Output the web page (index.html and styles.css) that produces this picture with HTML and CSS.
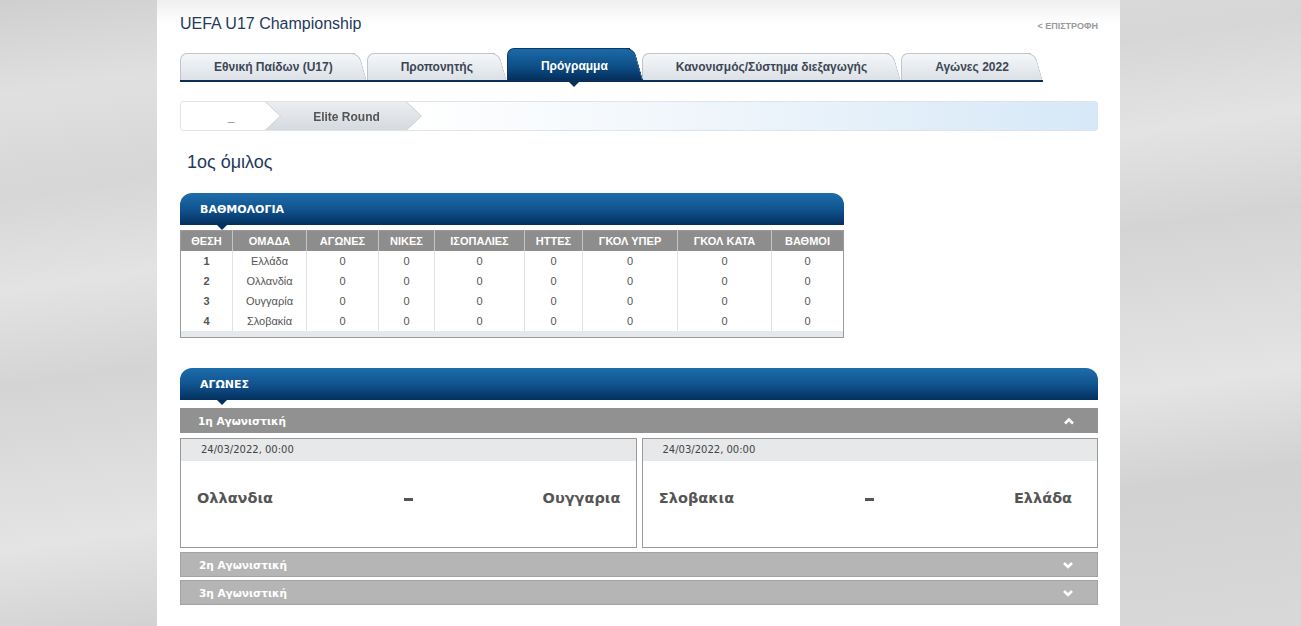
FILE: index.html
```html
<!DOCTYPE html>
<html lang="el">
<head>
    <meta charset="UTF-8">
    <meta name="viewport" content="width=device-width, initial-scale=1.0">
    <title>UEFA U17 Championship - Πρόγραμμα</title>
    <link rel="stylesheet" href="styles.css">
</head>
<body>
    <div class="page">
        <div class="top">
            <h1 class="title">UEFA U17 Championship</h1>
            <a class="back" href="#">&lt; ΕΠΙΣΤΡΟΦΗ</a>
        </div>

        <div class="tabs">
            <a class="tab" href="#">Εθνική Παίδων (U17)</a>
            <a class="tab" href="#">Προπονητής</a>
            <a class="tab active" href="#">Πρόγραμμα<span class="tab-arrow"></span></a>
            <a class="tab" href="#">Κανονισμός/Σύστημα διεξαγωγής</a>
            <a class="tab" href="#">Αγώνες 2022</a>
        </div>

        <div class="crumbs">
            <div class="crumb first">_</div>
            <div class="crumb-wrap">
                <div class="crumb step">Elite Round</div>
            </div>
        </div>

        <h2 class="group-title">1ος όμιλος</h2>

        <div class="panel standings">
            <div class="panel-head">ΒΑΘΜΟΛΟΓΙΑ</div>
            <table class="table">
                <colgroup>
                    <col class="c-pos"><col class="c-team"><col class="c-played"><col class="c-win">
                    <col class="c-draw"><col class="c-loss"><col class="c-gf"><col class="c-ga"><col class="c-pts">
                </colgroup>
                <thead>
                    <tr>
                        <th>ΘΕΣΗ</th><th>ΟΜΑΔΑ</th><th>ΑΓΩΝΕΣ</th><th>ΝΙΚΕΣ</th><th>ΙΣΟΠΑΛΙΕΣ</th>
                        <th>ΗΤΤΕΣ</th><th>ΓΚΟΛ ΥΠΕΡ</th><th>ΓΚΟΛ ΚΑΤΑ</th><th>ΒΑΘΜΟΙ</th>
                    </tr>
                </thead>
                <tbody>
                    <tr><td class="pos">1</td><td>Ελλάδα</td><td>0</td><td>0</td><td>0</td><td>0</td><td>0</td><td>0</td><td>0</td></tr>
                    <tr><td class="pos">2</td><td>Ολλανδία</td><td>0</td><td>0</td><td>0</td><td>0</td><td>0</td><td>0</td><td>0</td></tr>
                    <tr><td class="pos">3</td><td>Ουγγαρία</td><td>0</td><td>0</td><td>0</td><td>0</td><td>0</td><td>0</td><td>0</td></tr>
                    <tr><td class="pos">4</td><td>Σλοβακία</td><td>0</td><td>0</td><td>0</td><td>0</td><td>0</td><td>0</td><td>0</td></tr>
                </tbody>
            </table>
            <div class="table-foot"></div>
        </div>

        <div class="panel matches">
            <div class="panel-head">ΑΓΩΝΕΣ</div>

            <div class="round open">
                <span>1η Αγωνιστική</span>
                <svg class="chev" width="12" height="8" viewBox="0 0 12 8"><polyline points="2,6.5 6,2.5 10,6.5" fill="none" stroke="#fff" stroke-width="2.6"/></svg>
            </div>
            <div class="games">
                <div class="game">
                    <div class="game-date">24/03/2022, 00:00</div>
                    <div class="game-teams">
                        <span class="team">Ολλανδια</span>
                        <span class="score"></span>
                        <span class="team">Ουγγαρια</span>
                    </div>
                </div>
                <div class="game">
                    <div class="game-date">24/03/2022, 00:00</div>
                    <div class="game-teams">
                        <span class="team">Σλοβακια</span>
                        <span class="score"></span>
                        <span class="team">Ελλάδα</span>
                    </div>
                </div>
            </div>

            <div class="round">
                <span>2η Αγωνιστική</span>
                <svg class="chev" width="12" height="8" viewBox="0 0 12 8"><polyline points="2,2 6,6 10,2" fill="none" stroke="#fff" stroke-width="2.6"/></svg>
            </div>
            <div class="round">
                <span>3η Αγωνιστική</span>
                <svg class="chev" width="12" height="8" viewBox="0 0 12 8"><polyline points="2,2 6,6 10,2" fill="none" stroke="#fff" stroke-width="2.6"/></svg>
            </div>
        </div>
    </div>
</body>
</html>
```

FILE: styles.css
```css
html, body {
    margin: 0;
    height: 100%;
}
body {
    font-family: 'Liberation Sans', Arial, sans-serif;
    background: linear-gradient(172deg, #cfcfcf 0%, #e0e0e0 12%, #d6d6d6 24%, #e3e3e3 36%, #d4d4d4 48%, #dcdcdc 58%, #e4e4e4 68%, #d2d2d2 80%, #d8d8d8 100%);
    overflow: hidden;
}
.page {
    width: 963px;
    min-height: 100%;
    margin-left: 157px;
    box-sizing: border-box;
    padding: 14px 22px 0 23px;
    background: linear-gradient(#efefef 0, #fff 24px);
}
.top {
    display: flex;
    justify-content: space-between;
    align-items: flex-end;
}
.title {
    margin: 0;
    font-size: 16px;
    font-weight: normal;
    line-height: 19px;
    color: #1f3a5c;
}
.back {
    font-size: 9px;
    font-weight: bold;
    color: #9a9a9a;
    text-decoration: none;
    margin-bottom: 2px;
}

/* tabs */
.tabs {
    display: inline-flex;
    align-items: flex-end;
    margin-top: 15px;
    border-bottom: 2px solid #0a2f57;
}
.tab {
    position: relative;
    z-index: 1;
    height: 27px;
    line-height: 28px;
    padding: 0 34px;
    font-size: 12px;
    font-weight: bold;
    color: #3c4756;
    text-decoration: none;
    white-space: nowrap;
}
.tab::before,
.tab::after {
    content: '';
    position: absolute;
    top: 0;
    bottom: 0;
    z-index: -1;
    background: linear-gradient(#f5f7f9, #dce1e6);
    border-top: 1px solid #bfc5cc;
}
.tab::before {
    left: 0;
    right: 12px;
    border-left: 1px solid #bfc5cc;
    border-radius: 7px 0 0 0;
}
.tab::after {
    right: 8px;
    width: 24px;
    border-right: 1px solid #bfc5cc;
    border-radius: 0 8px 0 0;
    transform: skewX(16deg);
    transform-origin: top;
}
.tab.active {
    padding-top: 5px;
    line-height: 27px;
    color: #fff;
    z-index: 2;
}
.tab.active::before,
.tab.active::after {
    background: linear-gradient(#1c6aa7, #0e4f88 55%, #042f5c);
    border-color: #0b3a6a;
}
.tab-arrow {
    position: absolute;
    left: 50%;
    bottom: -7px;
    margin-left: -5px;
    border-left: 5px solid transparent;
    border-right: 5px solid transparent;
    border-top: 5px solid #0a2f57;
}

/* breadcrumb */
.crumbs {
    display: flex;
    margin-top: 19px;
    height: 28px;
    border: 1px solid #dfe4e8;
    border-radius: 3px;
    background: linear-gradient(90deg, #fff 0%, #fff 25%, #eef5fb 60%, #d6e8f7 100%);
}
.crumb {
    font-size: 12px;
    font-weight: bold;
    color: #555;
    line-height: 30px;
    text-align: center;
}
.crumb.first {
    width: 100px;
    background: #fff;
    border-radius: 3px 0 0 3px;
    margin-right: -15px;
}
.crumb-wrap {
    filter: drop-shadow(1px 0 0 #c9ced3) drop-shadow(-1px 0 0 #c9ced3);
}
.crumb.step {
    width: 155px;
    height: 28px;
    padding-left: 3px;
    background: linear-gradient(#eceef1, #d5dade);
    clip-path: polygon(0 0, 140px 0, 155px 50%, 140px 100%, 0 100%, 15px 50%);
}

.group-title {
    margin: 20px 0 0 7px;
    font-size: 18px;
    font-weight: normal;
    line-height: 22px;
    color: #1f3a5c;
}

/* panels */
.panel {
    margin-top: 20px;
}
.standings {
    width: 664px;
}
.matches {
    margin-top: 30px;
}
.panel-head {
    position: relative;
    height: 32px;
    line-height: 33px;
    padding-left: 20px;
    border-radius: 12px 12px 0 0;
    background: linear-gradient(#1d6dab, #115490 50%, #03305d);
    color: #fff;
    font-family: 'DejaVu Sans', Verdana, sans-serif;
    font-size: 11px;
    font-weight: bold;
}
.panel-head::after {
    content: '';
    position: absolute;
    left: 37px;
    bottom: -5px;
    border-left: 5px solid transparent;
    border-right: 5px solid transparent;
    border-top: 5px solid #03305d;
}

/* standings table */
.table {
    width: 100%;
    margin-top: 5px;
    border: 1px solid #9a9a9a;
    border-bottom: none;
    border-collapse: collapse;
    table-layout: fixed;
    font-size: 11px;
}
.c-pos { width: 52px; }
.c-team { width: 74px; }
.c-played { width: 72px; }
.c-win { width: 56px; }
.c-draw { width: 90px; }
.c-loss { width: 58px; }
.c-gf { width: 95px; }
.c-ga { width: 94px; }
.c-pts { width: 72px; }
.table th {
    height: 20px;
    padding: 0;
    background: #8d8d8d;
    color: #fff;
    font-weight: bold;
    border-left: 1px solid #c4c4c4;
}
.table td {
    height: 20px;
    padding: 0;
    text-align: center;
    color: #555;
    border-left: 1px solid #e2e2e2;
}
.table th:first-child,
.table td:first-child {
    border-left: none;
}
.table td.pos {
    font-weight: bold;
}
.table-foot {
    height: 6px;
    background: #e6e9ec;
    border: 1px solid #9a9a9a;
    border-top: none;
}

/* matches */
.round {
    display: flex;
    justify-content: space-between;
    align-items: center;
    height: 23px;
    margin-top: 3px;
    padding: 0 23px 0 18px;
    background: #b5b5b5;
    border: 1px solid #a3a3a3;
    color: #fff;
    font-family: 'DejaVu Sans', Verdana, sans-serif;
    font-size: 10.5px;
    font-weight: bold;
}
.round.open {
    margin-top: 8px;
    height: 25px;
    border: none;
    background: #919191;
}
.games {
    display: grid;
    grid-template-columns: 1fr 1fr;
    gap: 5px;
    margin: 5px 0 4px;
}
.game {
    border: 1px solid #9a9a9a;
    height: 108px;
}
.game-date {
    height: 22px;
    line-height: 22px;
    padding-left: 20px;
    background: #e6e8ea;
    color: #444;
    font-family: 'DejaVu Sans', Verdana, sans-serif;
    font-size: 10px;
}
.game-teams {
    display: grid;
    grid-template-columns: 108px 1fr 108px;
    justify-items: center;
    align-items: center;
    height: 20px;
    margin-top: 27px;
    color: #555;
    font-family: 'DejaVu Sans', Verdana, sans-serif;
    font-size: 14.5px;
    font-weight: bold;
}
.game-teams .score {
    width: 9px;
    height: 3px;
    margin-top: 2px;
    background: #555;
}
```
